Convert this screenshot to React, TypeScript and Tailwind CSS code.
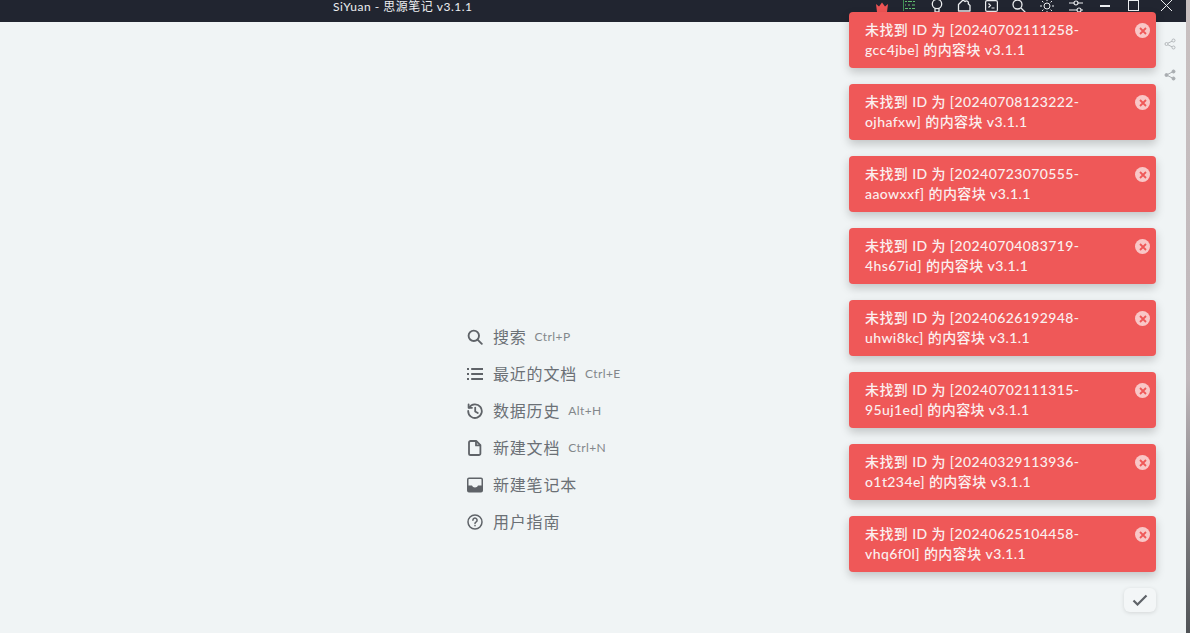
import React from "react";

const toasts = [
  ["20240702111258-", "gcc4jbe"],
  ["20240708123222-", "ojhafxw"],
  ["20240723070555-", "aaowxxf"],
  ["20240704083719-", "4hs67id"],
  ["20240626192948-", "uhwi8kc"],
  ["20240702111315-", "95uj1ed"],
  ["20240329113936-", "o1t234e"],
  ["20240625104458-", "vhq6f0l"],
];

const Share = ({ className, solid }: { className: string; solid?: boolean }) => (
  <svg viewBox="0 0 12 12" className={className} fill={solid ? "currentColor" : "none"} stroke="currentColor" strokeWidth="1">
    <circle cx="9.500" cy="2.500" r="1.500" />
    <circle cx="2.500" cy="6" r="1.500" />
    <circle cx="9.500" cy="9.500" r="1.500" />
    <path d="M4 5.200 8 3.200M4 6.800l4 2" />
  </svg>
);

const icon = "w-4 h-4 text-[#5f6368] shrink-0";
const items: [React.ReactNode, string, string][] = [
  [
    <svg viewBox="0 0 16 16" className={icon} fill="none" stroke="currentColor" strokeWidth="1.900" strokeLinecap="round"><circle cx="6.800" cy="6.800" r="5.200" /><path d="m10.800 10.800 4 4" /></svg>,
    "搜索", "Ctrl+P",
  ],
  [
    <svg viewBox="0 0 16 16" className={icon} fill="none" stroke="currentColor" strokeWidth="2"><path d="M0 3h2M4.200 3H16M0 8h2M4.200 8H16M0 13h2M4.200 13H16" /></svg>,
    "最近的文档", "Ctrl+E",
  ],
  [
    <svg viewBox="0 0 16 16" className={icon} fill="none" stroke="currentColor" strokeWidth="1.800" strokeLinecap="round" strokeLinejoin="round"><path d="M2.200 4.600A6.800 6.800 0 1 1 1.200 8" /><path d="M1.600 1.400v3.400H5" /><path d="M8.200 4.600v3.800l2.600 1.600" /></svg>,
    "数据历史", "Alt+H",
  ],
  [
    <svg viewBox="0 0 16 16" className={icon} fill="none" stroke="currentColor" strokeWidth="1.800" strokeLinejoin="round"><path d="M3.600 1h5.600L13.400 5.200V13.400A1.600 1.600 0 0 1 11.800 15H3.600A1.600 1.600 0 0 1 2 13.400V2.600A1.600 1.600 0 0 1 3.600 1Z" /><path d="M9 1v4.400h4.400" /></svg>,
    "新建文档", "Ctrl+N",
  ],
  [
    <svg viewBox="0 0 16 16" className={icon} fill="currentColor"><path d="M2 .5h12a2 2 0 0 1 2 2v11a2 2 0 0 1-2 2H2a2 2 0 0 1-2-2v-11a2 2 0 0 1 2-2Zm0 1.500a.5.5 0 0 0-.5.5V8.500H5c.4 1.300 1.600 2 3 2s2.600-.7 3-2h3.500V2.500a.5.5 0 0 0-.5-.5H2Z" /></svg>,
    "新建笔记本", "",
  ],
  [
    <svg viewBox="0 0 16 16" className={icon} fill="none" stroke="currentColor" strokeWidth="1.500" strokeLinecap="round"><circle cx="8" cy="8" r="7" /><path d="M5.900 6.200a2.100 2.100 0 1 1 3.300 1.700c-.8.5-1.200.9-1.200 1.700" /><path d="M8 11.600v.2" /></svg>,
    "用户指南", "",
  ],
];

export default function App() {
  return (
    <div className="relative h-[633px] w-[1190px] overflow-hidden bg-[#f0f4f5] font-['Lato','Noto_Sans_CJK_SC',sans-serif]">
      <header className="relative flex h-[22px] items-start bg-[#212530] text-[#eceef0]">
        <span className="ml-[333px] mt-[1px] text-xs tracking-[0.5px] leading-3">SiYuan - 思源笔记 v3.1.1</span>
        <div className="ml-auto flex items-start">
          <svg viewBox="0 0 12 10" className="h-[10px] w-[12px] mr-[15px] mt-[2px] text-[#ef5454]" fill="currentColor"><path d="M0 2 3 4.500 6 .5l3 4L12 2l-1 8H1Z" /></svg>
          <svg viewBox="0 0 13 11" className="h-[11px] w-[13px] mr-[15px]" fill="none"><path d="M.5 0v11" stroke="#3f8f55" /><path d="M2 1.500h2M5 1.500h4M10 1.500h2M2 5h1M5 5h2M9 5h3M2 8.500h3M6 8.500h2M9 8.500h3" stroke="#63c06f" /></svg>
          <svg viewBox="0 0 12 14" className="h-[14px] w-[12px] mr-[14px] -mt-[1px]" fill="none" stroke="currentColor" strokeWidth="1.300"><circle cx="6" cy="5" r="4.700" /><path d="M4 9.500v3.500h4V9.500" /></svg>
          <svg viewBox="0 0 14 14" className="h-[14px] w-[14px] mr-[14px] -mt-[2px]" fill="none" stroke="currentColor" strokeWidth="1.300" strokeLinejoin="round"><path d="M1.500 13V6.500L6 2l2 1.500a2 2 0 0 1 3.200 2.300L13 7.500V13Z" /></svg>
          <svg viewBox="0 0 13 12" className="h-[12px] w-[13px] mr-[14px]" fill="none" stroke="currentColor" strokeWidth="1.200"><rect x=".6" y=".6" width="11.800" height="10.800" rx="1.500" /><path d="m3.500 3.500 2 2-2 2M6.500 8h3" /></svg>
          <svg viewBox="0 0 14 14" className="h-[14px] w-[14px] mr-[14px] -mt-[1px]" fill="none" stroke="currentColor" strokeWidth="1.300"><circle cx="5.500" cy="5.500" r="4.500" /><path d="m9 9 4.500 4.500" /></svg>
          <svg viewBox="0 0 14 14" className="h-[14px] w-[14px] mr-[15px] -mt-[1px]" fill="none" stroke="currentColor"><circle cx="7" cy="7" r="3" /><path d="M7 0v2M7 12v2M0 7h2M12 7h2M2 2l1.400 1.400M10.600 10.600 12 12M2 12l1.400-1.400M10.600 3.400 12 2" /></svg>
          <svg viewBox="0 0 14 14" className="h-[14px] w-[14px] mr-[17px]" fill="none" stroke="currentColor" strokeWidth="1.200"><path d="M0 3h5M9 3h5M0 10h8M12 10h2" /><circle cx="7" cy="3" r="2" /><circle cx="10" cy="10" r="2" /></svg>
          <span className="mr-[18px] mt-[5px] h-[2px] w-[10px] bg-current" />
          <span className="mr-[22px] h-[11px] w-[11px] border border-current" />
          <svg viewBox="0 0 11 11" className="h-[11px] w-[11px] mr-[18px]" fill="none" stroke="currentColor"><path d="m0 0 11 11M11 0 0 11" /></svg>
        </div>
      </header>

      <main className="flex h-[611px] flex-col pl-[467px] pt-[296px] text-[#6b7075]">
        {items.map(([ic, label, key]) => (
          <div key={label} className="flex h-[37px] items-center">
            {ic}
            <span className="ml-[10px] text-base tracking-[0.8px]">{label}</span>
            {key && <span className="ml-2 text-xs tracking-[0.4px] text-[#83878b]">{key}</span>}
          </div>
        ))}
      </main>

      <Share className="absolute left-[1164px] top-[38px] h-3 w-3 text-[#b4b8bb]" />
      <Share solid className="absolute left-[1164px] top-[69px] h-3 w-3 text-[#a8acb0]" />

      <div className="absolute left-[849px] top-3 flex w-[307px] flex-col gap-4">
        {toasts.map(([a, b]) => (
          <div key={a} className="relative h-14 rounded bg-[#ef5858] px-4 pt-2 text-sm font-medium leading-5 tracking-[0.4px] text-[#fbefef] shadow-[0_4px_10px_rgba(0,0,0,0.2)]">
            <div>未找到 ID 为 [{a}</div>
            <div>{b}] 的内容块 v3.1.1</div>
            <span className="absolute right-[6px] top-[11px] flex h-[15px] w-[15px] items-center justify-center rounded-full bg-[#f9c7c7]">
              <svg viewBox="0 0 8 8" className="h-2 w-2 text-[#ef5858]" fill="none" stroke="currentColor" strokeWidth="1.800"><path d="m1 1 6 6M7 1 1 7" /></svg>
            </span>
          </div>
        ))}
      </div>

      <div className="absolute left-[1124px] top-[588px] flex h-6 w-8 items-center justify-center rounded-md bg-[#f3f6f7] shadow-[0_1px_4px_rgba(0,0,0,0.12)]">
        <svg viewBox="0 0 16 12" className="h-3 w-4 text-[#5f6368]" fill="none" stroke="currentColor" strokeWidth="2.200"><path d="m1.500 6.500 4 4 9-9" /></svg>
      </div>

      <div className="absolute right-0 top-0 bottom-0 w-1 bg-gradient-to-b from-[#c8c0c0] via-[#c0b8bc] via-60% to-[#505356]" />
    </div>
  );
}
